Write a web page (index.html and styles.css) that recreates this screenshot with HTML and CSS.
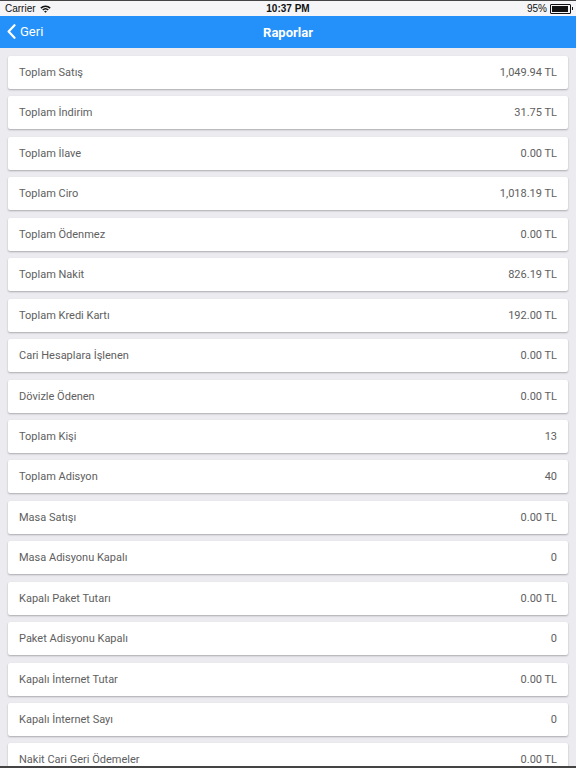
FILE: index.html
```html
<!DOCTYPE html>
<html lang="tr">
<head>
    <meta charset="UTF-8">
    <meta name="viewport" content="width=device-width, initial-scale=1.0">
    <title>Raporlar</title>
    <link rel="stylesheet" href="styles.css">
</head>
<body>
    <div class="status-bar">
        <span class="carrier">Carrier
            <svg class="wifi" width="11" height="8" viewBox="0 0 11 8">
                <path d="M0.3 2.6 A7.5 7.5 0 0 1 10.7 2.6 L9.6 3.7 A6 6 0 0 0 1.4 3.7 Z" fill="#111"/>
                <path d="M2.2 4.5 A4.8 4.8 0 0 1 8.8 4.5 L7.7 5.6 A3.3 3.3 0 0 0 3.3 5.6 Z" fill="#111"/>
                <path d="M4.1 6.4 A2 2 0 0 1 6.9 6.4 L5.5 7.8 Z" fill="#111"/>
            </svg>
        </span>
        <span class="clock">10:37 PM</span>
        <span class="battery">95%
            <span class="battery-icon"><span class="battery-level"></span></span>
        </span>
    </div>

    <div class="nav-bar">
        <a href="#" class="back-link">
            <svg width="9" height="15" viewBox="0 0 9 15">
                <path d="M7.5 1.2 L1.6 7.5 L7.5 13.8" fill="none" stroke="white" stroke-width="2.2" stroke-linecap="round" stroke-linejoin="round"/>
            </svg>
            Geri
        </a>
        <h1>Raporlar</h1>
    </div>

    <div class="report-list">
        <div class="report-row"><span>Toplam Satış</span><span>1,049.94 TL</span></div>
        <div class="report-row"><span>Toplam İndirim</span><span>31.75 TL</span></div>
        <div class="report-row"><span>Toplam İlave</span><span>0.00 TL</span></div>
        <div class="report-row"><span>Toplam Ciro</span><span>1,018.19 TL</span></div>
        <div class="report-row"><span>Toplam Ödenmez</span><span>0.00 TL</span></div>
        <div class="report-row"><span>Toplam Nakit</span><span>826.19 TL</span></div>
        <div class="report-row"><span>Toplam Kredi Kartı</span><span>192.00 TL</span></div>
        <div class="report-row"><span>Cari Hesaplara İşlenen</span><span>0.00 TL</span></div>
        <div class="report-row"><span>Dövizle Ödenen</span><span>0.00 TL</span></div>
        <div class="report-row"><span>Toplam Kişi</span><span>13</span></div>
        <div class="report-row"><span>Toplam Adisyon</span><span>40</span></div>
        <div class="report-row"><span>Masa Satışı</span><span>0.00 TL</span></div>
        <div class="report-row"><span>Masa Adisyonu Kapalı</span><span>0</span></div>
        <div class="report-row"><span>Kapalı Paket Tutarı</span><span>0.00 TL</span></div>
        <div class="report-row"><span>Paket Adisyonu Kapalı</span><span>0</span></div>
        <div class="report-row"><span>Kapalı İnternet Tutar</span><span>0.00 TL</span></div>
        <div class="report-row"><span>Kapalı İnternet Sayı</span><span>0</span></div>
        <div class="report-row"><span>Nakit Cari Geri Ödemeler</span><span>0.00 TL</span></div>
    </div>

    <div class="bottom-edge"></div>
</body>
</html>
```

FILE: styles.css
```css
html, body {
    height: 100%;
    overflow: hidden;
}
body {
    margin: 0;
    font-family: Roboto, 'Liberation Sans', sans-serif;
    background-color: #ebebf0;
    color: #606060;
}
.status-bar {
    height: 15px;
    border-top: 1px solid #444;
    background-color: #f5f5f7;
    display: flex;
    align-items: center;
    justify-content: space-between;
    padding: 0 5px;
    font-family: 'Liberation Sans', sans-serif;
    font-size: 10px;
    color: #111;
}
.carrier {
    display: flex;
    align-items: center;
    gap: 4px;
    width: 120px;
}
.clock {
    font-weight: bold;
}
.battery {
    display: flex;
    align-items: center;
    justify-content: flex-end;
    gap: 3px;
    width: 120px;
}
.battery-icon {
    width: 17px;
    height: 6px;
    border: 1px solid #111;
    border-radius: 1px;
    padding: 1px;
    position: relative;
}
.battery-icon::after {
    content: '';
    position: absolute;
    right: -3px;
    top: 2px;
    width: 1px;
    height: 3px;
    background-color: #111;
}
.battery-level {
    display: block;
    width: 95%;
    height: 100%;
    background-color: #111;
}
.nav-bar {
    height: 32px;
    background-color: #2391f9;
    display: flex;
    align-items: center;
    justify-content: center;
    position: relative;
    color: white;
}
.nav-bar h1 {
    margin: 0;
    font-size: 13px;
    font-weight: bold;
}
.back-link {
    position: absolute;
    left: 7px;
    top: 8px;
    display: flex;
    align-items: center;
    gap: 4px;
    color: white;
    text-decoration: none;
    font-size: 13px;
}
.report-list {
    padding: 8px 8px 0;
}
.report-row {
    height: 33px;
    margin-bottom: 7.45px;
    background-color: white;
    border-radius: 2px;
    box-shadow: 0 1px 2px rgba(0,0,0,0.28);
    display: flex;
    align-items: center;
    justify-content: space-between;
    padding: 0 11px;
    font-size: 11px;
}
.bottom-edge {
    position: fixed;
    left: 0;
    right: 0;
    bottom: 0;
    height: 2px;
    background-color: #444;
}
```
